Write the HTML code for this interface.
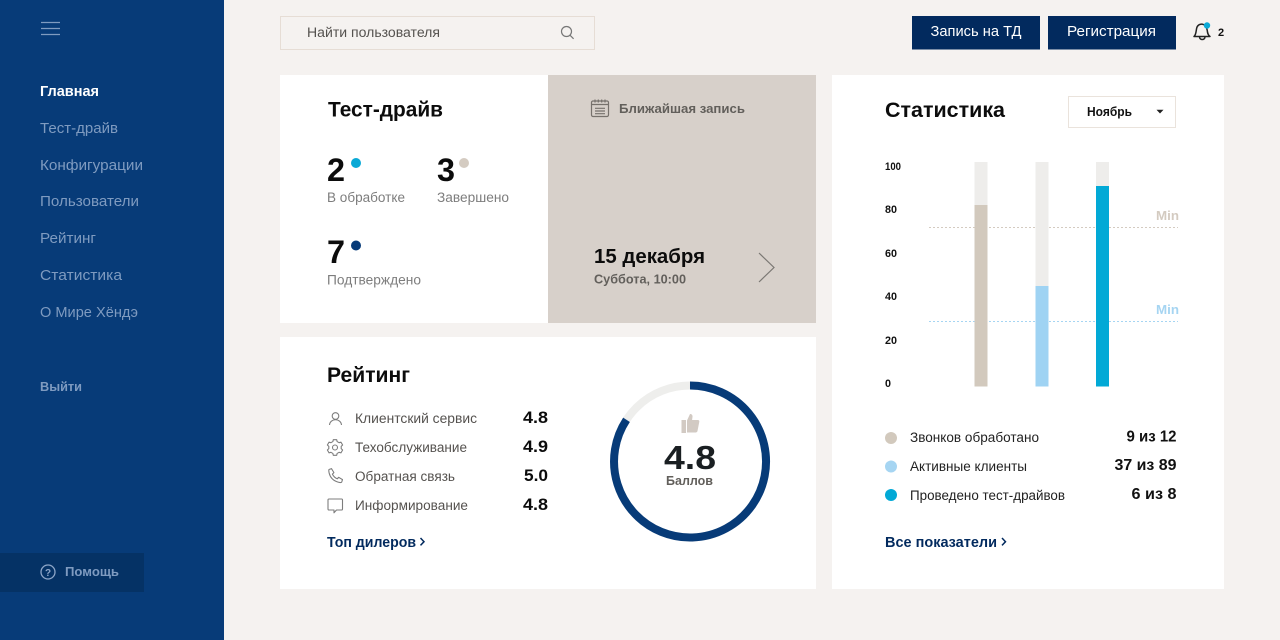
<!DOCTYPE html>
<html lang="ru">
<head>
<meta charset="utf-8">
<title>Dashboard</title>
<style>
html,body{margin:0;padding:0;width:1280px;height:640px;overflow:hidden;background:#f5f2f0}
svg{display:block}
text{font-family:"Liberation Sans",sans-serif}
.b{font-weight:bold}
</style>
</head>
<body>
<svg width="1280" height="640" viewBox="0 0 1280 640" xmlns="http://www.w3.org/2000/svg">
<rect width="1280" height="640" fill="#f5f2f0"/>
<!-- sidebar -->
<rect width="224" height="640" fill="#073b78"/>
<rect y="553" width="144" height="39" fill="#05305f" opacity=".75"/>
<g stroke="#7f9bc0" stroke-width="1.2"><path d="M41 22.500h19M41 28.500h19M41 34.500h19"/></g>
<g font-size="15" fill="#7f9bc0">
<text class="b" x="40" y="96" fill="#fff" textLength="59" lengthAdjust="spacingAndGlyphs">Главная</text>
<text x="40" y="133" textLength="78" lengthAdjust="spacingAndGlyphs">Тест-драйв</text>
<text x="40" y="170" textLength="103" lengthAdjust="spacingAndGlyphs">Конфигурации</text>
<text x="40" y="206" textLength="99" lengthAdjust="spacingAndGlyphs">Пользователи</text>
<text x="40" y="243" textLength="56" lengthAdjust="spacingAndGlyphs">Рейтинг</text>
<text x="40" y="280" textLength="82" lengthAdjust="spacingAndGlyphs">Статистика</text>
<text x="40" y="317" textLength="98" lengthAdjust="spacingAndGlyphs">О Мире Хёндэ</text>
</g>
<text x="40" y="391" font-size="13" font-weight="bold" fill="#7f9bc0" textLength="42" lengthAdjust="spacingAndGlyphs">Выйти</text>
<circle cx="48" cy="572" r="7" fill="none" stroke="#8ea6c8" stroke-width="1.300"/>
<text x="48" y="576" font-size="10" font-weight="bold" fill="#8ea6c8" text-anchor="middle">?</text>
<text x="65" y="576" font-size="13" font-weight="bold" fill="#7f9bc0" textLength="54" lengthAdjust="spacingAndGlyphs">Помощь</text>

<!-- search -->
<rect x="280.500" y="16.500" width="314" height="33" fill="#f5f2f0" stroke="#e6ddd5"/>
<text x="307" y="37" font-size="13.500" fill="#55524f" textLength="133" lengthAdjust="spacingAndGlyphs">Найти пользователя</text>
<circle cx="566.500" cy="31.500" r="5" fill="none" stroke="#777" stroke-width="1.200"/>
<path d="M570 35.200l3.600 3.600" stroke="#777" stroke-width="1.200"/>

<!-- buttons -->
<rect x="912" y="16" width="128" height="33.500" fill="#022a5e"/>
<text x="930.500" y="36" font-size="14.500" fill="#fff" textLength="91" lengthAdjust="spacingAndGlyphs">Запись на ТД</text>
<rect x="1048" y="16" width="128" height="33.500" fill="#022a5e"/>
<text x="1067" y="36" font-size="14.500" fill="#fff" textLength="89" lengthAdjust="spacingAndGlyphs">Регистрация</text>
<path d="M1194 36.500c2-1.500 2-5 2.600-8 .6-3 3-4.800 6-4.300 2.800.5 4.200 3 4.600 6 .3 2.600.6 4.800 2.800 6.300z" fill="none" stroke="#222" stroke-width="1.500" stroke-linejoin="round"/>
<path d="M1199.500 37c.3 3.400 5.200 3.400 5.500 0" fill="none" stroke="#222" stroke-width="1.500"/>
<circle cx="1207" cy="25.500" r="3.200" fill="#0aa9d6"/>
<text x="1218" y="36" font-size="11" font-weight="bold" fill="#111">2</text>

<!-- card test drive -->
<rect x="280" y="75" width="268" height="248" fill="#fff"/>
<rect x="548" y="75" width="268" height="248" fill="#d7d0ca"/>
<text class="b" x="328" y="116.500" font-size="21" fill="#0c0c0c" textLength="115" lengthAdjust="spacingAndGlyphs">Тест-драйв</text>
<text class="b" x="327" y="181" font-size="32" fill="#0c0c0c" textLength="18" lengthAdjust="spacingAndGlyphs">2</text>
<circle cx="356" cy="163" r="5" fill="#0aa9d6"/>
<text x="327" y="202" font-size="13.500" fill="#7d7d7d" textLength="78" lengthAdjust="spacingAndGlyphs">В обработке</text>
<text class="b" x="437" y="181" font-size="32" fill="#0c0c0c" textLength="18" lengthAdjust="spacingAndGlyphs">3</text>
<circle cx="464" cy="163" r="5" fill="#d4cbc1"/>
<text x="437" y="202" font-size="13.500" fill="#7d7d7d" textLength="72" lengthAdjust="spacingAndGlyphs">Завершено</text>
<text class="b" x="327" y="263" font-size="32" fill="#0c0c0c" textLength="18" lengthAdjust="spacingAndGlyphs">7</text>
<circle cx="356" cy="245.500" r="5" fill="#073b78"/>
<text x="327" y="284.500" font-size="13.500" fill="#7d7d7d" textLength="94" lengthAdjust="spacingAndGlyphs">Подтверждено</text>

<!-- calendar -->
<g fill="none" stroke="#76716c" stroke-width="1.200">
<rect x="591.500" y="101" width="17" height="15.500" rx="1.500"/>
<path d="M591.500 104.500h17M595 99.500v3M598.300 99.500v3M601.700 99.500v3M605 99.500v3M595 108.300h10M595 111h10M595 113.700h10"/>
</g>
<text class="b" x="619" y="113" font-size="12.500" fill="#625f5b" textLength="126" lengthAdjust="spacingAndGlyphs">Ближайшая запись</text>
<text class="b" x="594" y="263" font-size="20" fill="#0c0c0c" textLength="111" lengthAdjust="spacingAndGlyphs">15 декабря</text>
<text class="b" x="594" y="283.500" font-size="13" fill="#625f5b" textLength="92" lengthAdjust="spacingAndGlyphs">Суббота, 10:00</text>
<path d="M759 253l15 14.500-15 14.500" fill="none" stroke="#7a7773" stroke-width="1.200"/>

<!-- card rating -->
<rect x="280" y="337" width="536" height="252" fill="#fff"/>
<text class="b" x="327" y="382" font-size="21" fill="#0c0c0c" textLength="83" lengthAdjust="spacingAndGlyphs">Рейтинг</text>
<g fill="none" stroke="#7d7d7d" stroke-width="1.100" stroke-linejoin="round">
<circle cx="335.500" cy="416" r="3.300"/>
<path d="M329.500 425c.6-7 11.400-7 12 0"/>
<g transform="translate(335 447.500)">
<circle r="2.500"/>
<path d="M-1.660-7.830L1.660-7.830L2.150-5.920L4.050-4.830L5.950-5.350L7.610-2.470L6.200-1.090L6.200 1.090L7.610 2.470L5.950 5.350L4.050 4.830L2.150 5.920L1.660 7.830L-1.660 7.830L-2.150 5.920L-4.050 4.830L-5.950 5.350L-7.610 2.470L-6.200 1.090L-6.200-1.090L-7.610-2.470L-5.950-5.350L-4.050-4.830L-2.150-5.920Z"/>
</g>
<path d="M329 469.500l2.500-.9 2.400 4-1.500 1.500c1 2 2.800 3.800 4.800 4.700l1.500-1.500 3.800 2.300-.8 2.500c-.4 1-6.100.2-9.500-3.300-3.400-3.600-3.600-8.500-3.200-9.300z"/>
<path d="M329 499h12.500c.6 0 1 .4 1 1v9c0 .6-.4 1-1 1h-5l-2.500 2.800v-2.800h-5c-.6 0-1-.4-1-1v-9c0-.6.4-1 1-1z"/>
</g>
<g font-size="13.500" fill="#55524f">
<text x="355" y="423" textLength="122" lengthAdjust="spacingAndGlyphs">Клиентский сервис</text>
<text x="355" y="452" textLength="112" lengthAdjust="spacingAndGlyphs">Техобслуживание</text>
<text x="355" y="481" textLength="100" lengthAdjust="spacingAndGlyphs">Обратная связь</text>
<text x="355" y="510" textLength="113" lengthAdjust="spacingAndGlyphs">Информирование</text>
</g>
<g font-size="16.500" font-weight="bold" fill="#0c0c0c">
<text x="523" y="423" textLength="25" lengthAdjust="spacingAndGlyphs">4.8</text>
<text x="523" y="452" textLength="25" lengthAdjust="spacingAndGlyphs">4.9</text>
<text x="524" y="481" textLength="24" lengthAdjust="spacingAndGlyphs">5.0</text>
<text x="523" y="510" textLength="25" lengthAdjust="spacingAndGlyphs">4.8</text>
</g>
<text class="b" x="327" y="547" font-size="14.500" fill="#022a5e" textLength="89" lengthAdjust="spacingAndGlyphs">Топ дилеров</text>
<path d="M420.500 538l3.500 3.700-3.500 3.700" fill="none" stroke="#022a5e" stroke-width="1.500"/>

<!-- ring -->
<circle cx="690" cy="461.500" r="76" fill="none" stroke="#eeeeec" stroke-width="8"/>
<path d="M690 385.500A76 76 0 1 1 626.500 419.800" fill="none" stroke="#073b78" stroke-width="8"/>
<path d="M681.500 420h4.500v13h-4.500zM687 420.500l3-6.500c1.600 0 2.700 1 2.500 2.700l-.4 3.300h5.700c1.100 0 1.700.9 1.500 1.800l-1.800 9.200c-.2.800-.9 1.500-1.800 1.500h-8.700z" fill="#d2cac3"/>
<text class="b" x="664" y="469" font-size="33" fill="#1a1f22" textLength="52" lengthAdjust="spacingAndGlyphs">4.8</text>
<text class="b" x="666" y="485" font-size="13" fill="#625f5b" textLength="47" lengthAdjust="spacingAndGlyphs">Баллов</text>

<!-- card stats -->
<rect x="832" y="75" width="392" height="514" fill="#fff"/>
<text class="b" x="885" y="117" font-size="21" fill="#0c0c0c" textLength="120" lengthAdjust="spacingAndGlyphs">Статистика</text>
<rect x="1068.500" y="96.500" width="107" height="31" fill="#fff" stroke="#eae3dc"/>
<text class="b" x="1087" y="116" font-size="13" fill="#111" textLength="45" lengthAdjust="spacingAndGlyphs">Ноябрь</text>
<path d="M1156.500 109.700h7l-3.500 3.800z" fill="#222"/>
<g font-size="11" font-weight="bold" fill="#111">
<text x="885" y="170" textLength="16" lengthAdjust="spacingAndGlyphs">100</text>
<text x="885" y="213" textLength="12" lengthAdjust="spacingAndGlyphs">80</text>
<text x="885" y="257" textLength="12" lengthAdjust="spacingAndGlyphs">60</text>
<text x="885" y="300" textLength="12" lengthAdjust="spacingAndGlyphs">40</text>
<text x="885" y="344" textLength="12" lengthAdjust="spacingAndGlyphs">20</text>
<text x="885" y="387" textLength="6" lengthAdjust="spacingAndGlyphs">0</text>
</g>
<path d="M929 227.500H1178" stroke="#d4cbc1" stroke-width="1" stroke-dasharray="2 2"/>
<path d="M929 321.500H1178" stroke="#a6d5f2" stroke-width="1" stroke-dasharray="2 2"/>
<text class="b" x="1156" y="220" font-size="13" fill="#d4cbc1" textLength="23" lengthAdjust="spacingAndGlyphs">Min</text>
<text class="b" x="1156" y="314" font-size="13" fill="#a6d5f2" textLength="23" lengthAdjust="spacingAndGlyphs">Min</text>
<rect x="974.500" y="162" width="13" height="224.500" fill="#eeedeb"/>
<rect x="974.500" y="205" width="13" height="181.500" fill="#d2c9bd"/>
<rect x="1035.500" y="162" width="13" height="224.500" fill="#eeedeb"/>
<rect x="1035.500" y="286" width="13" height="100.500" fill="#9fd3f3"/>
<rect x="1096" y="162" width="13" height="224.500" fill="#eeedeb"/>
<rect x="1096" y="186" width="13" height="200.500" fill="#02a9d6"/>
<circle cx="891" cy="438" r="6" fill="#d2c9bd"/>
<circle cx="891" cy="466.500" r="6" fill="#a6d5f2"/>
<circle cx="891" cy="495" r="6" fill="#02a9d6"/>
<g font-size="13.500" fill="#222">
<text x="910" y="442" textLength="129" lengthAdjust="spacingAndGlyphs">Звонков обработано</text>
<text x="910" y="471" textLength="117" lengthAdjust="spacingAndGlyphs">Активные клиенты</text>
<text x="910" y="500" textLength="155" lengthAdjust="spacingAndGlyphs">Проведено тест-драйвов</text>
</g>
<g font-size="15.500" font-weight="bold" fill="#111">
<text x="1126.500" y="441.500" textLength="50" lengthAdjust="spacingAndGlyphs">9 из 12</text>
<text x="1114.500" y="470" textLength="62" lengthAdjust="spacingAndGlyphs">37 из 89</text>
<text x="1131.500" y="499" textLength="45" lengthAdjust="spacingAndGlyphs">6 из 8</text>
</g>
<text class="b" x="885" y="547" font-size="14.500" fill="#022a5e" textLength="112" lengthAdjust="spacingAndGlyphs">Все показатели</text>
<path d="M1002 538l3.500 3.700-3.500 3.700" fill="none" stroke="#022a5e" stroke-width="1.500"/>
</svg>
</body>
</html>
